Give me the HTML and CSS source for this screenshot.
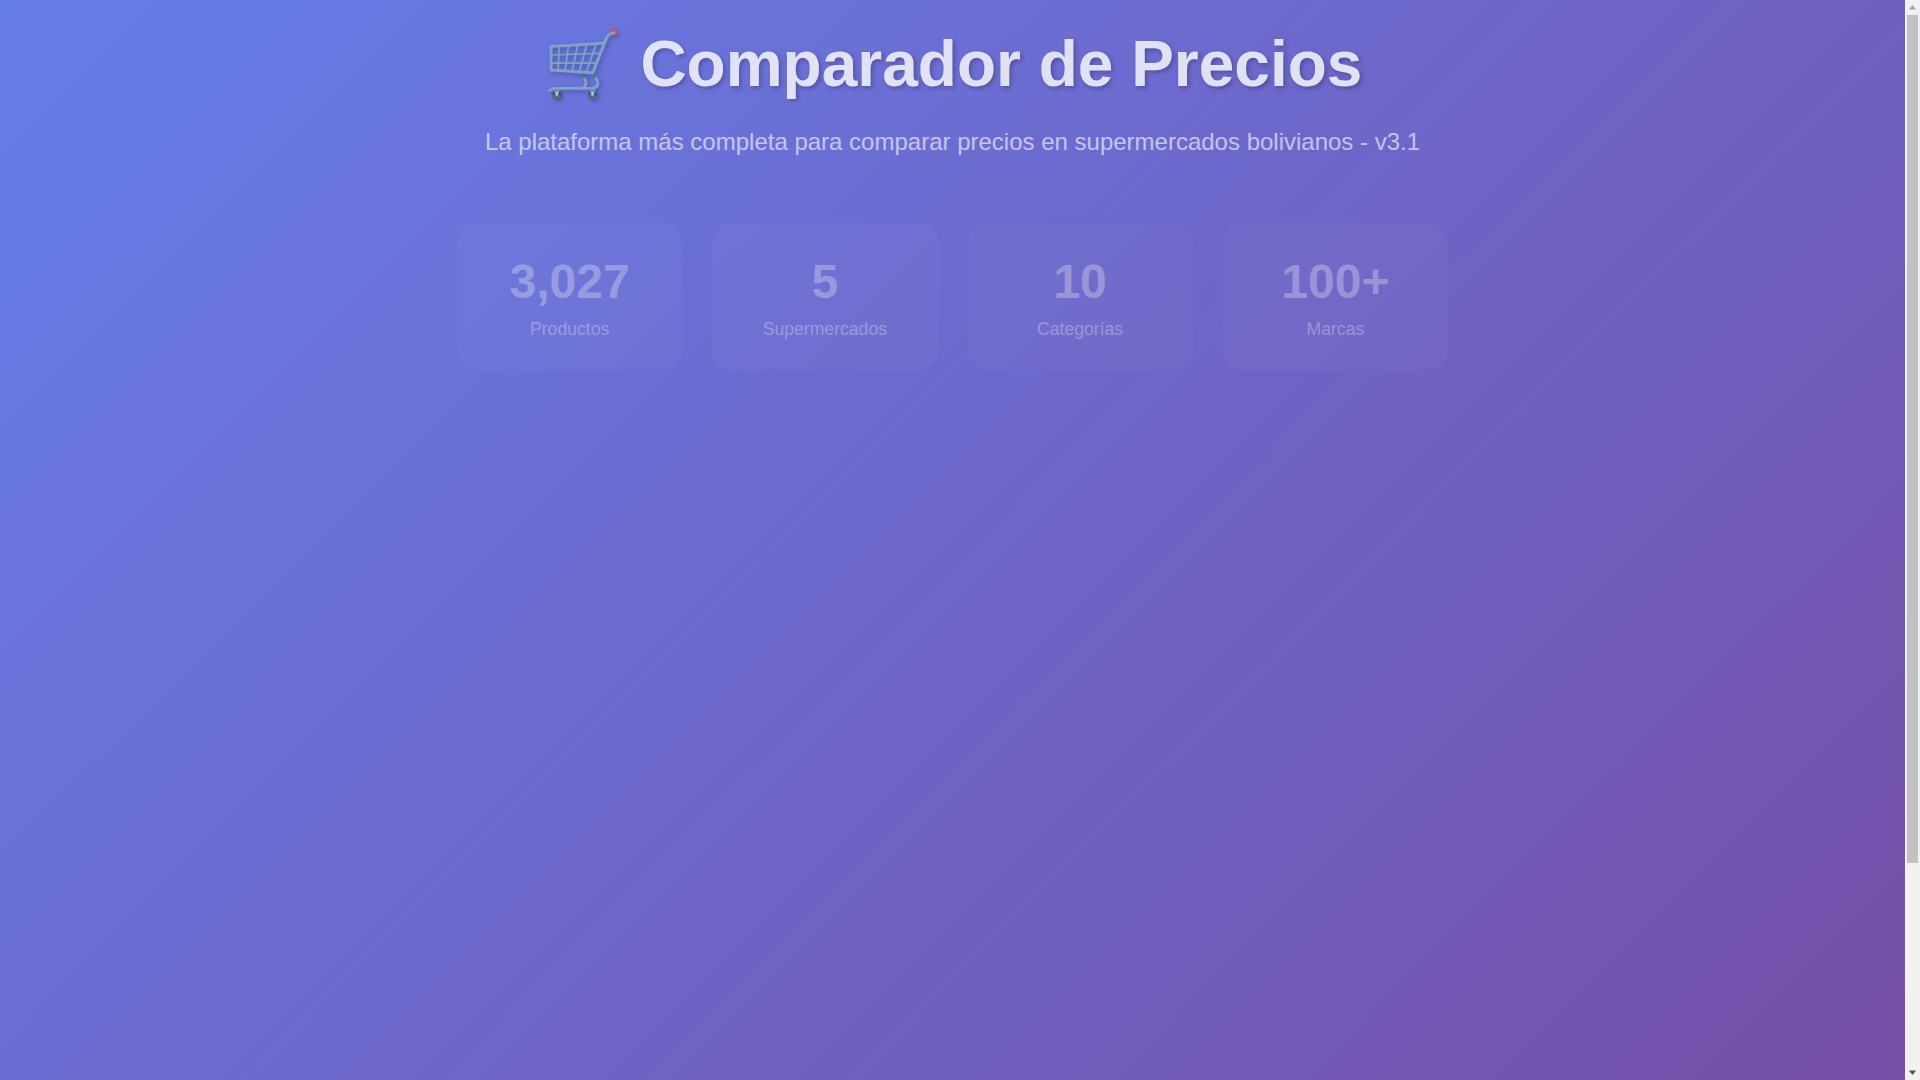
FILE: index.html
```html
<!DOCTYPE html>
<html lang="es">
  <head>
    <title>Comparador de Precios</title>
    <meta charset="utf-8">
    <link rel="stylesheet" href="styles.css">
  </head>
<body>
  <div class="page">
    <main class="container">
      <header class="header">
        <h1>🛒 Comparador de Precios</h1>
        <p>La plataforma más completa para comparar precios en supermercados bolivianos - v3.1</p>
      </header>

      <section class="stats">
        <div class="stat-card">
          <div class="stat-number">3,027</div>
          <div class="stat-label">Productos</div>
        </div>
        <div class="stat-card">
          <div class="stat-number">5</div>
          <div class="stat-label">Supermercados</div>
        </div>
        <div class="stat-card">
          <div class="stat-number">10</div>
          <div class="stat-label">Categorías</div>
        </div>
        <div class="stat-card">
          <div class="stat-number">100+</div>
          <div class="stat-label">Marcas</div>
        </div>
      </section>
    </main>
  </div>

  <div class="scrollbar">
    <svg class="scroll-arrow" width="15" height="15" viewBox="0 0 15 15"><path d="M7.5 5 L11 9.5 L4 9.5 Z" fill="#a3a3a3"/></svg>
    <div class="scroll-track">
      <div class="scroll-thumb"></div>
    </div>
    <svg class="scroll-arrow" width="15" height="15" viewBox="0 0 15 15"><path d="M4 5.5 L11 5.5 L7.5 10 Z" fill="#505050"/></svg>
  </div>
</body>
</html>
```

FILE: styles.css
```css
* {
  margin: 0;
  padding: 0;
  box-sizing: border-box;
}

body {
  display: flex;
  height: 1080px;
  overflow: hidden;
  font-family: "Liberation Sans", Arial, sans-serif;
  color: white;
}

.page {
  flex: 1;
  background: #764ba2 linear-gradient(135deg, #667eea 0%, #764ba2 100%) no-repeat;
  background-size: 100% 1337px;
}

.container {
  max-width: 1400px;
  margin: 0 auto;
  padding: 20px;
}

.header {
  text-align: center;
  margin-bottom: 67px;
}

.header h1 {
  font-size: 4rem;
  font-weight: bold;
  line-height: 88px;
  margin-bottom: 20px;
  opacity: 0.8;
  text-shadow: 2px 2px 4px rgba(0, 0, 0, 0.3);
}

.header p {
  font-size: 1.5rem;
  opacity: 0.6;
}

.stats {
  display: grid;
  grid-template-columns: repeat(4, 225.25px);
  gap: 30px;
  justify-content: center;
  opacity: 0.3;
}

.stat-card {
  padding: 30.5px 30px 30px;
  text-align: center;
  background: rgba(255, 255, 255, 0.1);
  border-radius: 20px;
}

.stat-number {
  font-size: 3rem;
  font-weight: bold;
  margin-bottom: 10px;
}

.stat-label {
  font-size: 1.1rem;
}

.scrollbar {
  display: flex;
  flex-direction: column;
  width: 15px;
  background: #f1f1f1;
}

.scroll-arrow {
  display: block;
  flex: none;
}

.scroll-track {
  flex: 1;
  padding: 0 2px;
}

.scroll-thumb {
  height: 848px;
  background: #c1c1c1;
}
```
